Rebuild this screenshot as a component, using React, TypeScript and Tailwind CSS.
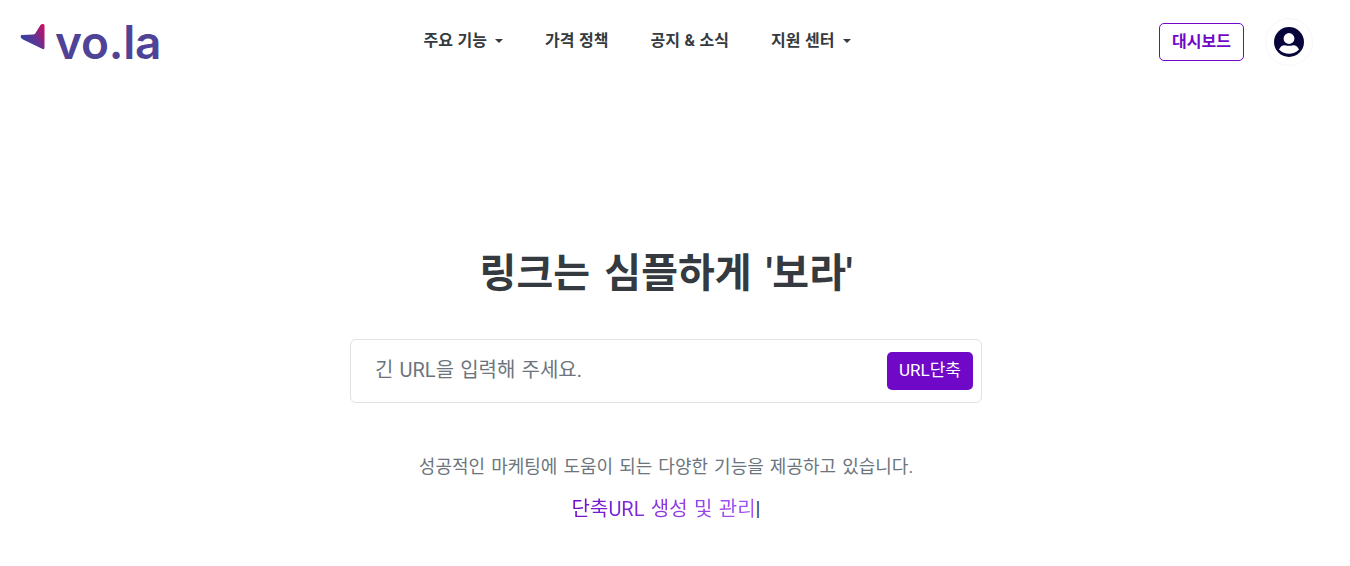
const cjk = "font-['Roboto','Noto_Sans_CJK_KR',sans-serif] [word-spacing:0.1em]";

function Caret() {
  return <span className="ml-2 inline-block h-0 w-0 border-x-[4px] border-t-[4px] border-x-transparent border-t-[#343a40]" />;
}

function Logo() {
  return (
    <div className="flex items-start">
      <svg width="28" height="28" viewBox="0 0 28 28" className="mt-[23px] ml-[3px]">
        <defs>
          <linearGradient id="mark" x1="0" y1="0.75" x2="1" y2="0.15">
            <stop offset="0" stopColor="#2b46a3" />
            <stop offset="0.5" stopColor="#5a3596" />
            <stop offset="1" stopColor="#c80f62" />
          </linearGradient>
        </defs>
        <path
          d="M2 12 L13 11.6 Q14.6 11.5 15.4 10.2 L20.5 2 Q21.4 0.8 23.2 1 Q24.5 1.2 24.5 2.6 L24.5 24.6 Q24.5 26.6 22.6 26 L3 16.4 Q0.4 15 0.6 13.4 Q0.8 12 2 12 Z"
          fill="url(#mark)"
        />
      </svg>
      <span className="mt-[10px] ml-[7px] w-[107px] font-['Inter',sans-serif] text-[46px] leading-[64px] font-semibold tracking-[-0.2px] text-[#4f4398]">
        vo.la
      </span>
    </div>
  );
}

function Header() {
  return (
    <header className="flex h-[80px] items-start justify-between pr-[37px] pl-[17px]">
      <Logo />
      <nav className="mt-[29px] mr-[47px] flex gap-[42px] text-[16px] leading-[24px] font-bold [word-spacing:0.04em] text-[#343a40]">
        <a className="flex items-center">주요 기능<Caret /></a>
        <a>가격 정책</a>
        <a>공지 &amp; 소식</a>
        <a className="flex items-center">지원 센터<Caret /></a>
      </nav>
      <div className="mt-[18px] flex items-center gap-[21px]">
        <button className="h-[38px] w-[85px] rounded-[5px] border border-[#7008c8] text-[16px] font-bold text-[#7008c8]">
          대시보드
        </button>
        <div className="flex h-[48px] w-[48px] items-center justify-center rounded-full border border-[#f6f6f8]">
          <svg width="30" height="30" viewBox="0 0 30 30">
            <circle cx="15" cy="15" r="15" fill="#07053a" />
            <circle cx="15" cy="11.5" r="5.4" fill="#fff" />
            <path d="M5 22.5 Q7 18 11 18.2 Q15 19.5 19 18.2 Q23 18 25 22.5 Q20.5 26.8 15 26.8 Q9.5 26.8 5 22.5 Z" fill="#fff" />
          </svg>
        </div>
      </div>
    </header>
  );
}

export default function App() {
  return (
    <div className={`h-[566px] overflow-hidden bg-white ${cjk}`}>
      <Header />
      <main className="flex flex-col items-center pr-[18px]">
        <h1 className="mt-[164px] text-[40px] leading-[60px] font-bold [word-spacing:0.11em] text-[#343a40]">
          링크는 심플하게 '보라'
        </h1>
        <form className="mt-[35px] flex h-[64px] w-[632px] items-center justify-between rounded-[6px] border border-[#e2e2e4] pr-[8px] pl-[24px]">
          <span className="mb-[2px] text-[20px] [word-spacing:0.06em] text-[#6c757d]">긴 URL을 입력해 주세요.</span>
          <button type="button" className="h-[38px] w-[86px] rounded-[5px] bg-[#7008c8] text-[17px] text-white">
            URL단축
          </button>
        </form>
        <p className="mt-[50px] text-[18px] leading-[27px] text-[#6c757d]">
          성공적인 마케팅에 도움이 되는 다양한 기능을 제공하고 있습니다.
        </p>
        <div className="mt-[14px] flex items-center text-[20px] leading-[30px] [word-spacing:0.07em]">
          <span className="bg-gradient-to-r from-[#7008c8] to-[#a855f7] bg-clip-text text-transparent">
            단축URL 생성 및 관리
          </span>
          <span className="text-[#343a40]">|</span>
        </div>
      </main>
    </div>
  );
}
